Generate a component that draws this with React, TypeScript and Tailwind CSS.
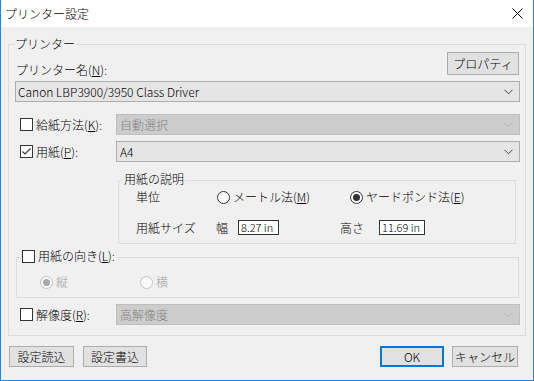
import React from "react";

const font = { fontFamily: '"Noto Sans CJK JP", "Noto Sans", sans-serif' };

function U({ c }: { c: string }) {
  return <span className="underline underline-offset-[1px]">{c}</span>;
}

function Chevron({ disabled }: { disabled?: boolean }) {
  return (
    <svg width="9" height="6" viewBox="0 0 9 6" className="shrink-0">
      <path d="M0.5 0.8 L4.5 4.8 L8.5 0.8" fill="none" stroke={disabled ? "#b5b5b5" : "#404040"} strokeWidth="1" />
    </svg>
  );
}

function Combo({ text, disabled, className }: { text: string; disabled?: boolean; className: string }) {
  return (
    <div
      className={`h-[21px] flex items-center justify-between pr-[6px] border ${
        disabled ? "bg-[#cccccc] border-[#bfbfbf] text-[#838383]" : "bg-[#e5e5e5] border-[#adadad] text-black"
      } ${className}`}
    >
      <span className="leading-[14px] whitespace-nowrap">{text}</span>
      <Chevron disabled={disabled} />
    </div>
  );
}

function Check({ checked }: { checked?: boolean }) {
  return (
    <div className="w-[13px] h-[13px] border border-[#333333] bg-white shrink-0 flex items-center justify-center">
      {checked && (
        <svg width="11" height="11" viewBox="0 0 11 11">
          <path d="M1.5 5.5 L4 8 L9.5 2.5" fill="none" stroke="#333333" strokeWidth="1.1" />
        </svg>
      )}
    </div>
  );
}

function Radio({ checked, disabled }: { checked?: boolean; disabled?: boolean }) {
  return (
    <div
      className={`w-[13px] h-[13px] rounded-full border shrink-0 flex items-center justify-center ${
        disabled ? "border-[#c2c2c2] bg-[#fafafa]" : "border-[#333333] bg-white"
      }`}
    >
      {checked && <div className={`w-[7px] h-[7px] rounded-full ${disabled ? "bg-[#a8a8a8]" : "bg-[#333333]"}`} />}
    </div>
  );
}

function Btn({ label, className, def }: { label: string; className: string; def?: boolean }) {
  return (
    <div
      className={`h-[21px] flex items-center justify-center bg-[#e1e1e1] leading-[14px] whitespace-nowrap ${
        def ? "border-2 border-[#0078d7]" : "border border-[#adadad]"
      } ${className}`}
    >
      {label}
    </div>
  );
}

export default function App() {
  return (
    <div
      className="w-[534px] h-[381px] flex flex-col border-x border-b border-[#2b86d8] bg-[#f0f0f0] text-[12px] font-light text-black overflow-hidden"
      style={font}
    >
      {/* Title bar */}
      <div className="h-[27px] shrink-0 bg-white flex items-center justify-between pl-[4px] pr-[10px]">
        <span className="leading-[14px]">プリンター設定</span>
        <svg width="11" height="11" viewBox="0 0 11 11">
          <path d="M0.5 0.5 L10.5 10.5 M10.5 0.5 L0.5 10.5" stroke="#000" strokeWidth="1" />
        </svg>
      </div>

      {/* Body */}
      <div className="flex-1 flex flex-col">
        {/* Outer group */}
        <div className="relative ml-[7px] mt-[17px] w-[518px] h-[292px] border border-[#dcdcdc] flex flex-col">
          <span className="absolute left-[5px] top-[-8px] px-[1px] bg-[#f0f0f0] leading-[14px]">プリンター</span>

          <div className="flex justify-between items-start mt-[7px] pl-[7px] pr-[6px]">
            <span className="mt-[11px] leading-[14px]">
              プリンター名(<U c="N" />):
            </span>
            <Btn label="プロパティ" className="w-[72px] !h-[23px]" />
          </div>

          <Combo text="Canon LBP3900/3950 Class Driver" className="ml-[6px] mt-[4px] w-[505px] pl-[2px]" />

          {/* Paper source */}
          <div className="flex items-center mt-[12px]">
            <div className="w-[107px] flex items-center pl-[11px] gap-[3px]">
              <Check />
              <span className="leading-[14px]">
                給紙方法(<U c="K" />):
              </span>
            </div>
            <Combo text="自動選択" disabled className="w-[404px] pl-[3px]" />
          </div>

          {/* Paper */}
          <div className="flex items-center mt-[6px]">
            <div className="w-[107px] flex items-center pl-[11px] gap-[3px]">
              <Check checked />
              <span className="leading-[14px]">
                用紙(<U c="P" />):
              </span>
            </div>
            <Combo text="A4" className="w-[404px] pl-[3px]" />
          </div>

          {/* Paper description group */}
          <div className="relative ml-[109px] mt-[18px] w-[398px] h-[64px] border border-[#dcdcdc] flex flex-col">
            <span className="absolute left-[4px] top-[-9px] px-[1px] bg-[#f0f0f0] leading-[14px]">用紙の説明</span>
            <div className="flex items-center h-[14px] mt-[9px] pl-[17px]">
              <span className="w-[81px] leading-[14px]">単位</span>
              <div className="w-[133px] flex items-center gap-[3px]">
                <Radio />
                <span className="leading-[14px]">
                  メートル法(<U c="M" />)
                </span>
              </div>
              <div className="flex items-center gap-[3px]">
                <Radio checked />
                <span className="leading-[14px]">
                  ヤードポンド法(<U c="E" />)
                </span>
              </div>
            </div>
            <div className="flex items-center h-[15px] mt-[16px] pl-[17px]">
              <span className="w-[80px] leading-[14px]">用紙サイズ</span>
              <span className="w-[22px] leading-[14px]">幅</span>
              <div className="w-[41px] h-[15px] border border-[#333333] bg-white flex items-center pl-[2px] text-[11px] leading-[13px] whitespace-nowrap">
                8.27 in
              </div>
              <span className="ml-[61px] w-[39px] leading-[14px]">高さ</span>
              <div className="w-[46px] h-[15px] border border-[#333333] bg-white flex items-center pl-[2px] text-[11px] leading-[13px] whitespace-nowrap">
                11.69 in
              </div>
            </div>
          </div>

          {/* Orientation group */}
          <div className="relative ml-[7px] mt-[13px] w-[503px] h-[41px] border border-[#dcdcdc] flex flex-col">
            <div className="absolute left-[4px] top-[-9px] pr-[2px] pl-[1px] bg-[#f0f0f0] flex items-center gap-[3px]">
              <Check />
              <span className="leading-[14px]">
                用紙の向き(<U c="L" />):
              </span>
            </div>
            <div className="flex items-center h-[14px] mt-[17px] pl-[23px] text-[#a0a0a0]">
              <div className="w-[100px] flex items-center gap-[3px]">
                <Radio checked disabled />
                <span className="leading-[14px]">縦</span>
              </div>
              <div className="flex items-center gap-[3px]">
                <Radio disabled />
                <span className="leading-[14px]">横</span>
              </div>
            </div>
          </div>

          {/* Resolution */}
          <div className="flex items-center mt-[6px]">
            <div className="w-[107px] flex items-center pl-[11px] gap-[3px]">
              <Check />
              <span className="leading-[14px]">
                解像度(<U c="R" />):
              </span>
            </div>
            <Combo text="高解像度" disabled className="w-[404px] pl-[3px]" />
          </div>
        </div>

        {/* Bottom buttons */}
        <div className="flex items-center mt-[10px] pl-[8px] pr-[15px]">
          <Btn label="設定読込" className="w-[65px]" />
          <Btn label="設定書込" className="w-[64px] ml-[9px]" />
          <div className="flex-1" />
          <Btn label="OK" className="w-[64px]" def />
          <Btn label="キャンセル" className="w-[66px] ml-[8px]" />
        </div>
      </div>
    </div>
  );
}
